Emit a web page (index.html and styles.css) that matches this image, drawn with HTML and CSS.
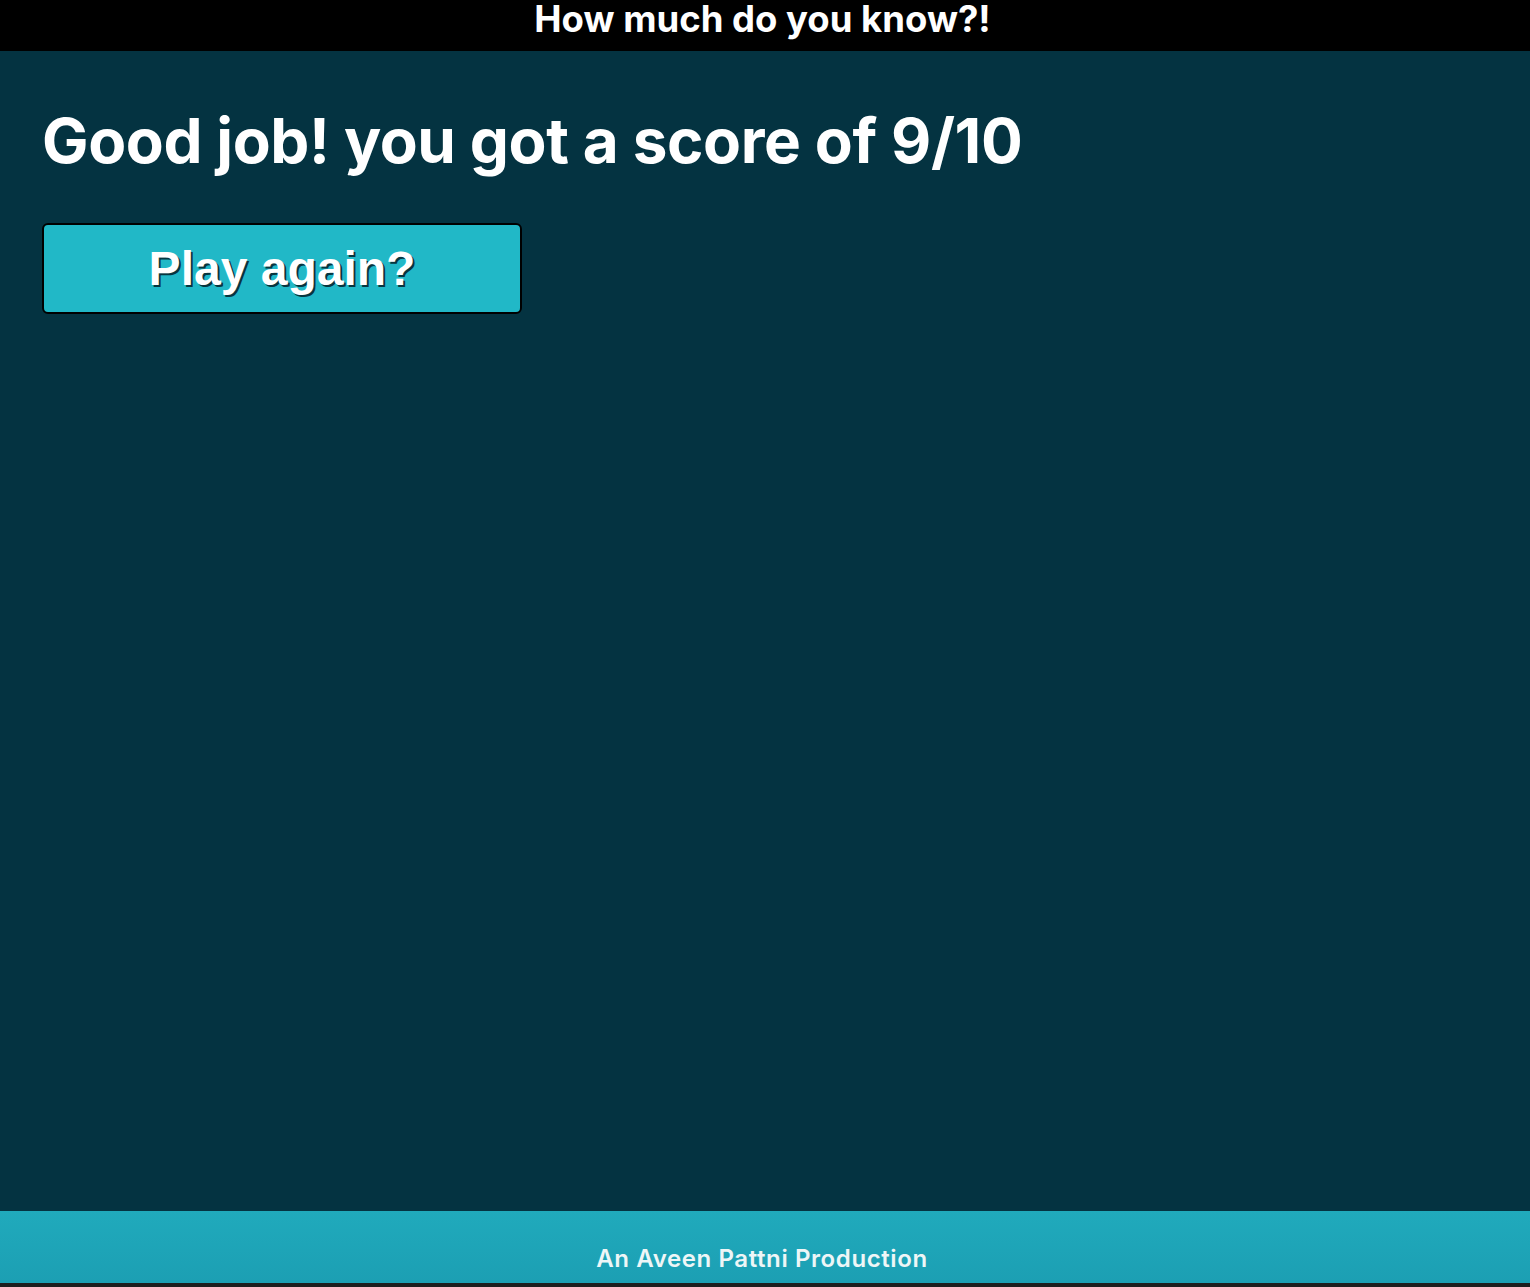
FILE: index.html
```html
<!DOCTYPE html>
<html>
<head>
<meta charset="utf-8">
<link rel="stylesheet" href="styles.css">
</head>
<body>
<div class="page">
  <header class="topbar"><h2 class="site-title">How much do you know?!</h2></header>
  <main class="content">
    <h1 class="result">Good job! you got a score of 9/10</h1>
    <button class="again">Play again?</button>
  </main>
  <footer class="footer"><p class="credit">An Aveen Pattni Production</p></footer>
  <div class="bottom-strip"></div>
</div>
</body>
</html>
```
FILE: styles.css
```css
html, body {
  margin: 0;
  padding: 0;
  height: 100%;
}
body {
  background: #043341;
  font-family: Inter, "Noto Sans", sans-serif;
  color: #ffffff;
}
.page {
  display: flex;
  flex-direction: column;
  height: 1287px;
}
.topbar {
  background: #000000;
  height: 51px;
  display: flex;
  justify-content: center;
  align-items: flex-start;
  padding-right: 5px;
  box-sizing: border-box;
}
.site-title {
  margin: 0;
  font-size: 36.5px;
  font-weight: 700;
  line-height: 38px;
}
.content {
  flex: 1;
  padding: 0 42px;
}
.result {
  margin: 52px 0 44px;
  font-size: 62px;
  font-weight: 700;
  line-height: 76px;
  letter-spacing: -0.4px;
}
.again {
  width: 480px;
  height: 91px;
  background: #21b8c7;
  border: 2px solid #000000;
  border-radius: 6px;
  font-family: "Liberation Sans", Arial, sans-serif;
  font-weight: 700;
  font-size: 48px;
  color: #ffffff;
  text-shadow: 2px 2px 0 #073640;
  padding: 0;
}
.footer {
  height: 72px;
  background: linear-gradient(#20aabc, #1c9fb3);
  display: flex;
  justify-content: center;
  align-items: flex-end;
  padding-right: 6px;
  box-sizing: border-box;
}
.credit {
  margin: 0 0 10px;
  font-size: 24px;
  font-weight: 600;
  color: #eef6f7;
  letter-spacing: 0.6px;
}
.bottom-strip {
  height: 4px;
  background: #1e1e1e;
}
```
